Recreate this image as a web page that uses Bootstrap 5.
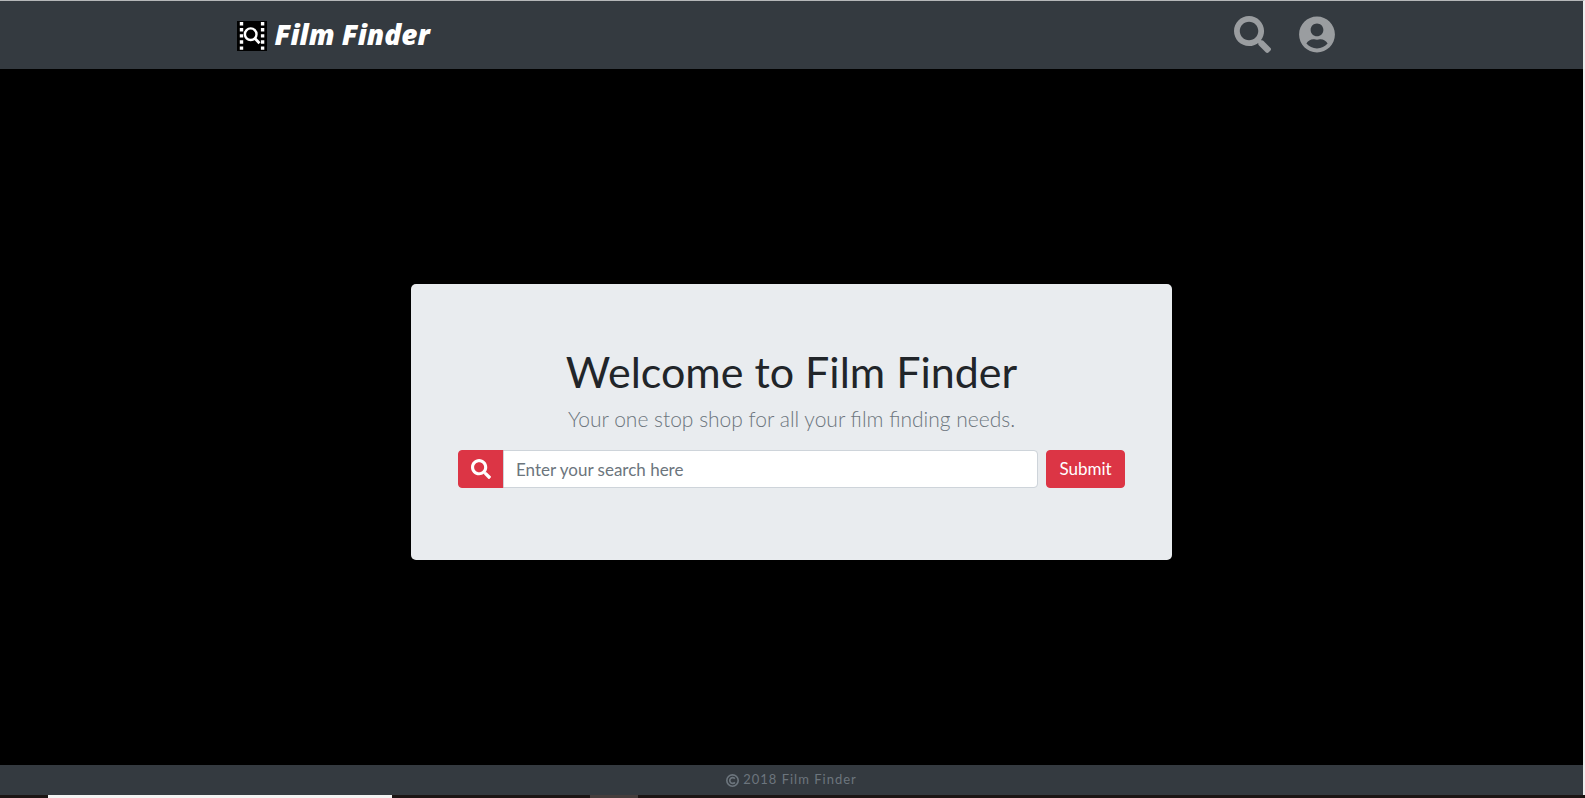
<!DOCTYPE html>
<html lang="en">
<head>
<meta charset="utf-8">
<meta name="viewport" content="width=device-width, initial-scale=1">
<title>Film Finder</title>
<link href="https://cdn.jsdelivr.net/npm/bootstrap@5.3.0/dist/css/bootstrap.min.css" rel="stylesheet">
<style>
  body { background: #000; font-family: Lato, "Open Sans", sans-serif; }
  .page-frame { border-top: 1px solid #b5b7b9; border-right: 2px solid #eee; }
  .slate { background: #343a40; }
  .inner { max-width: 1110px; }
  .site-nav { height: 68px; }
  .brand-name { font-family: "Open Sans", sans-serif; font-weight: 800; font-style: italic; font-size: 28px; line-height: 36px; margin-bottom: 4px; }
  .brand-link { padding-top: 2px; }
  .nav-links { padding-right: 12px; padding-bottom: 2px; }
  .nav-icon { color: #9a9da0; line-height: 0; }
  .content-area { padding-top: 10px; }
  .hero { max-width: 761px; background: #e9ecef; border-radius: 5px; padding: 64px 47px 72px; }
  .hero h1 { font-size: 43px; line-height: 48px; color: #212529; margin-bottom: 8px; font-weight: 400; }
  .hero .tagline { font-size: 21px; line-height: 30px; font-weight: 300; color: #6c757d; margin-bottom: 16px; }
  .hero .form-control { border-color: #ced4da; border-radius: 0 4px 4px 0; height: 38px; padding: 6px 12px; font-size: 17px; line-height: 24px; }
  .hero .form-control::placeholder { color: #6c757d; }
  .hero .input-group-text { width: 46px; border-radius: 4px 0 0 4px; }
  .hero .btn { border-radius: 4px; width: 79px; height: 38px; padding: 6px 12px; font-size: 17px; line-height: 24px; }
  .site-footer { height: 30px; font-size: 13px; letter-spacing: 1px; color: #6c757d; }
  .desk-edge { height: 3px; background: #1c1514; }
  .desk-window { width: 344px; margin-left: 48px; background: #f2f2f2; }
  .desk-task { width: 48px; margin-left: 198px; background: #453d3c; }
</style>
</head>
<body>
<div class="d-flex flex-column min-vh-100">
  <div class="page-frame d-flex flex-column flex-grow-1">
    <nav class="site-nav slate d-flex align-items-center" aria-label="Main">
      <div class="inner container-fluid px-0 d-flex align-items-center justify-content-between">
        <a class="brand-link d-flex align-items-center text-white text-decoration-none" href="#">
          <svg width="30" height="30" viewBox="0 0 30 30" aria-hidden="true">
            <path fill="#000" d="M0 0h30v30H0z"/>
            <path stroke="#fff" stroke-width="3.400" stroke-dasharray="3.4 2.7" d="M4.500 1v28M25.600 1v28"/>
            <circle cx="13.700" cy="13.200" r="5.800" fill="none" stroke="#fff" stroke-width="2.400"/>
            <path stroke="#fff" stroke-width="2.800" d="m17.700 17.300 4.800 5"/>
          </svg>
          <span class="brand-name ms-2">Film Finder</span>
        </a>
        <div class="nav-links d-flex gap-4">
          <a class="nav-icon" href="#" aria-label="Search">
            <svg width="37" height="37" viewBox="0 0 512 512" fill="currentColor"><path d="M505 442.700 405.300 343c-4.500-4.500-10.600-7-17-7H372c27.600-35.300 44-79.700 44-128C416 93.100 322.900 0 208 0S0 93.100 0 208s93.100 208 208 208c48.300 0 92.700-16.400 128-44v16.300c0 6.400 2.500 12.500 7 17l99.700 99.700c9.400 9.400 24.600 9.400 33.900 0l28.300-28.300c9.400-9.400 9.400-24.600.1-34zM208 336c-70.700 0-128-57.200-128-128 0-70.700 57.200-128 128-128 70.700 0 128 57.200 128 128 0 70.700-57.200 128-128 128z"/></svg>
          </a>
          <a class="nav-icon ms-1" href="#" aria-label="Account">
            <svg width="36" height="37" viewBox="0 0 496 512" fill="currentColor"><path d="M248 8C111 8 0 119 0 256s111 248 248 248 248-111 248-248S385 8 248 8zm0 96c48.600 0 88 39.400 88 88s-39.400 88-88 88-88-39.400-88-88 39.400-88 88-88zm0 344c-58.700 0-111.300-26.600-146.500-68.200 18.800-35.400 55.600-59.800 98.500-59.800 2.400 0 4.800.4 7.100 1.100 13 4.200 26.600 6.900 40.900 6.900 14.300 0 28-2.700 40.900-6.900 2.300-.7 4.700-1.100 7.100-1.100 42.900 0 79.700 24.400 98.500 59.800C359.300 421.400 306.700 448 248 448z"/></svg>
          </a>
        </div>
      </div>
    </nav>
    <main class="content-area flex-grow-1 d-flex align-items-center justify-content-center">
      <section class="hero w-100 text-center">
        <h1>Welcome to Film Finder</h1>
        <p class="tagline">Your one stop shop for all your film finding needs.</p>
        <form class="d-flex gap-2" onsubmit="return false">
          <div class="input-group flex-grow-1 w-auto">
            <label class="input-group-text justify-content-center bg-danger border-danger text-white p-0" for="q" aria-label="Search">
              <svg width="20" height="20" viewBox="0 0 512 512" fill="currentColor" aria-hidden="true"><path d="M505 442.700 405.300 343c-4.500-4.500-10.600-7-17-7H372c27.600-35.300 44-79.700 44-128C416 93.100 322.900 0 208 0S0 93.100 0 208s93.100 208 208 208c48.300 0 92.700-16.400 128-44v16.300c0 6.400 2.500 12.500 7 17l99.700 99.700c9.400 9.400 24.600 9.400 33.900 0l28.300-28.300c9.400-9.400 9.400-24.600.1-34zM208 336c-70.700 0-128-57.200-128-128 0-70.700 57.200-128 128-128 70.700 0 128 57.200 128 128 0 70.700-57.200 128-128 128z"/></svg>
            </label>
            <input class="form-control" id="q" type="text" placeholder="Enter your search here">
          </div>
          <button class="btn btn-danger" type="submit">Submit</button>
        </form>
      </section>
    </main>
    <footer class="site-footer slate d-flex align-items-center justify-content-center">
      <svg class="me-1" width="13" height="13" viewBox="0 0 16 16" fill="none" stroke="currentColor" stroke-width="2" aria-label="Copyright" role="img"><circle cx="8" cy="8" r="7"/><path d="M11 10.300A3.600 3.600 0 1 1 11 5.700"/></svg>
      <span>2018 Film Finder</span>
    </footer>
  </div>
  <div class="desk-edge d-flex" aria-hidden="true"><div class="desk-window"></div><div class="desk-task"></div></div>
</div>
<script src="https://cdn.jsdelivr.net/npm/bootstrap@5.3.0/dist/js/bootstrap.bundle.min.js"></script>
</body>
</html>
